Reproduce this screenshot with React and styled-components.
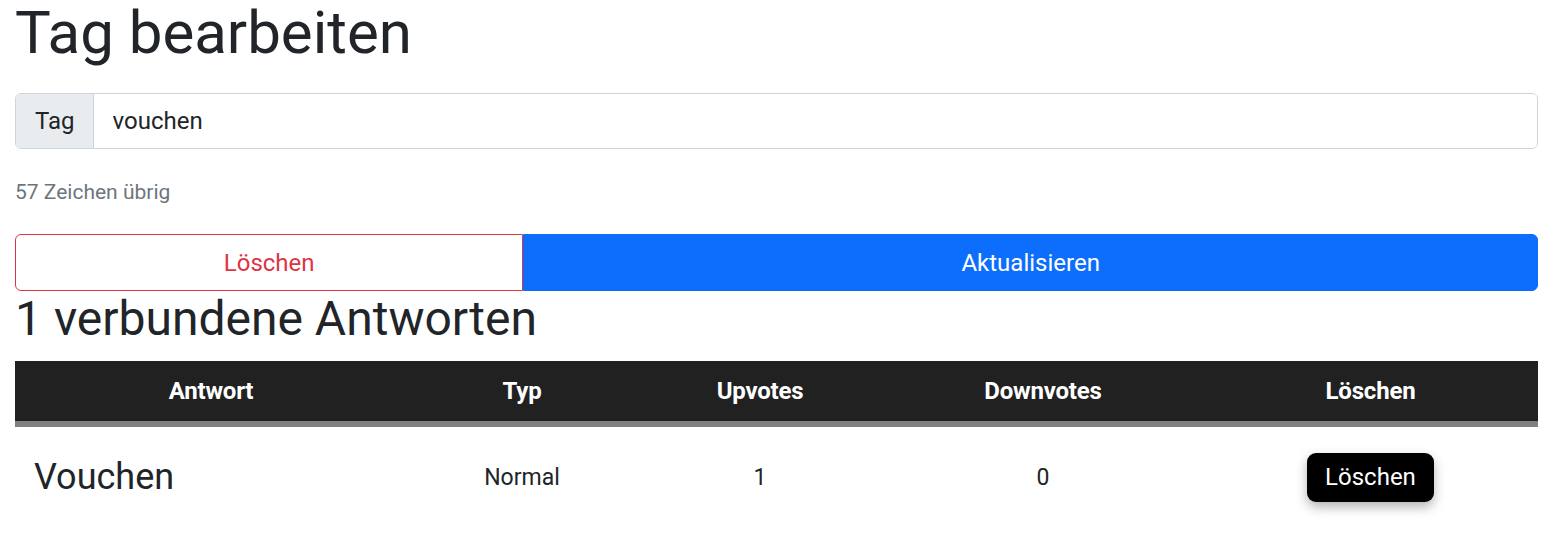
import React from "react";
import styled, { createGlobalStyle } from "styled-components";

const Global = createGlobalStyle`
  html, body { margin: 0; padding: 0; background: #fff; }
  body { font-family: Roboto, "Liberation Sans", sans-serif; color: #212529; }
  * { box-sizing: border-box; }
`;

const Page = styled.div`
  padding: 0 9px 0 15px;
`;

const Title = styled.h1`
  margin: 0 0 27px;
  font-size: 60px;
  font-weight: 400;
  line-height: 1.1;
  color: #212529;
`;

const InputGroup = styled.div`
  display: flex;
  height: 56px;
  border: 1px solid #ced4da;
  border-radius: 6px;
  overflow: hidden;
`;

const Addon = styled.span`
  display: flex;
  align-items: center;
  padding: 0 18px 0 19px;
  background: #e9ecef;
  border-right: 1px solid #ced4da;
  font-size: 24px;
  color: #212529;
`;

const Input = styled.input`
  flex: 1;
  border: none;
  outline: none;
  padding: 0 19px;
  font-family: inherit;
  font-size: 24px;
  color: #212529;
  background: #fff;
`;

const Hint = styled.div`
  margin-top: 31px;
  font-size: 21px;
  color: #6c757d;
  line-height: 1.2;
`;

const ButtonGroup = styled.div`
  display: flex;
  margin-top: 29px;
  height: 57px;
`;

const GroupButton = styled.button`
  flex: ${(p) => p.$grow} 1 0;
  min-width: 0;
  padding: 0;
  font-family: inherit;
  font-size: 24px;
  border: 1px solid ${(p) => (p.$variant === "danger" ? "#dc3545" : "#0d6efd")};
  background: ${(p) => (p.$variant === "danger" ? "#fff" : "#0d6efd")};
  color: ${(p) => (p.$variant === "danger" ? "#dc3545" : "#fff")};
  border-radius: ${(p) => (p.$variant === "danger" ? "6px 0 0 6px" : "0 6px 6px 0")};
  cursor: pointer;
`;

const SubTitle = styled.h2`
  margin: 2px 0 15px;
  font-size: 48px;
  font-weight: 400;
  line-height: 1.1;
  color: #212529;
`;

const Table = styled.table`
  width: 100%;
  border-collapse: collapse;
  table-layout: fixed;
`;

const HeadRow = styled.tr`
  background: #212121;
  border-bottom: 6px solid #808080;
`;

const Th = styled.th`
  height: 63px;
  padding: 0;
  color: #fff;
  font-size: 24px;
  font-weight: 700;
  letter-spacing: -0.2px;
  text-align: center;
`;

const Td = styled.td`
  height: 104px;
  padding: 0 19px;
  text-align: ${(p) => (p.$left ? "left" : "center")};
  font-size: ${(p) => (p.$big ? "36px" : "23px")};
  color: #212529;
  vertical-align: middle;
`;

const DeleteButton = styled.button`
  height: 49px;
  padding: 0 18px;
  background: #000;
  color: #fff;
  border: none;
  border-radius: 9px;
  font-family: inherit;
  font-size: 24px;
  box-shadow: 0 5px 12px rgba(0, 0, 0, 0.3);
  cursor: pointer;
`;

const columns = [
  { label: "Antwort", width: 392 },
  { label: "Typ", width: 230 },
  { label: "Upvotes", width: 246 },
  { label: "Downvotes", width: 320 },
  { label: "Löschen", width: 335 },
];

export default function App() {
  return (
    <>
      <Global />
      <Page>
        <Title>Tag bearbeiten</Title>
        <InputGroup>
          <Addon>Tag</Addon>
          <Input defaultValue="vouchen" />
        </InputGroup>
        <Hint>57 Zeichen übrig</Hint>
        <ButtonGroup>
          <GroupButton $variant="danger" $grow={1}>Löschen</GroupButton>
          <GroupButton $variant="primary" $grow={2}>Aktualisieren</GroupButton>
        </ButtonGroup>
        <SubTitle>1 verbundene Antworten</SubTitle>
        <Table>
          <colgroup>
            {columns.map((c) => (
              <col key={c.label} style={{ width: c.width }} />
            ))}
          </colgroup>
          <thead>
            <HeadRow>
              {columns.map((c) => (
                <Th key={c.label}>{c.label}</Th>
              ))}
            </HeadRow>
          </thead>
          <tbody>
            <tr>
              <Td $left $big>Vouchen</Td>
              <Td>Normal</Td>
              <Td>1</Td>
              <Td>0</Td>
              <Td>
                <DeleteButton>Löschen</DeleteButton>
              </Td>
            </tr>
          </tbody>
        </Table>
      </Page>
    </>
  );
}
